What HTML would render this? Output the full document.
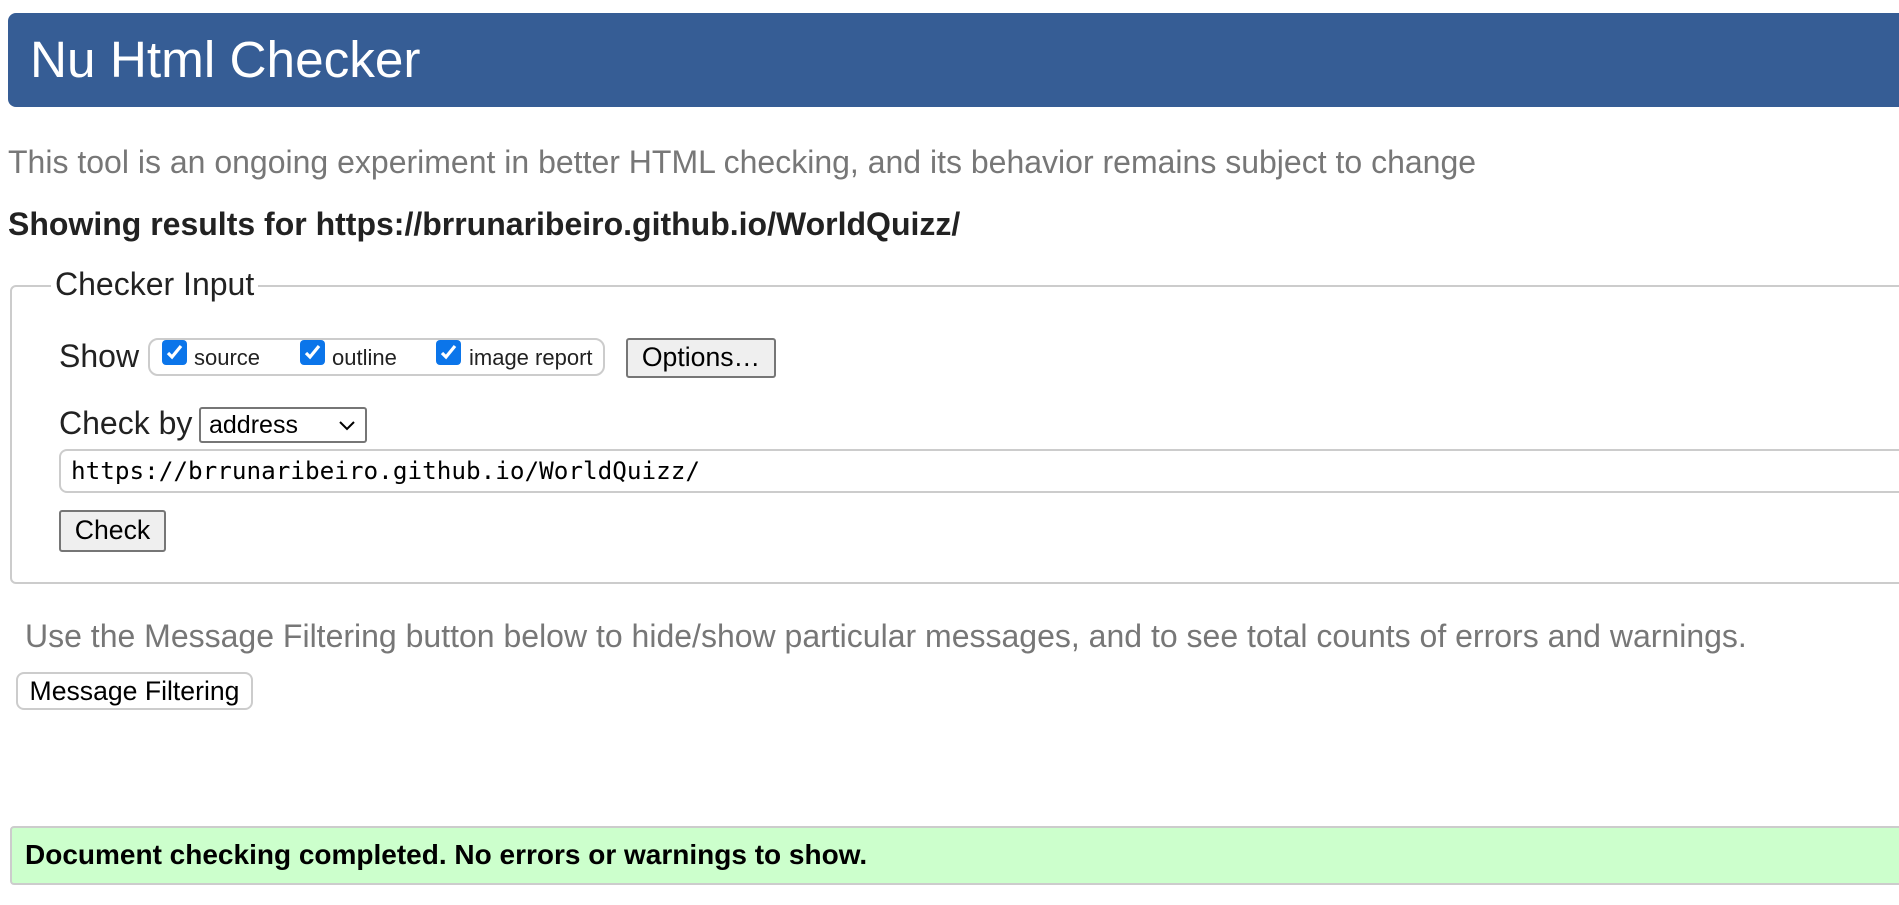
<!DOCTYPE html>
<html><head><meta charset="utf-8"><style>
body{margin:0;width:1899px;height:905px;background:#fff;font-family:"Liberation Sans",Arial,sans-serif;position:relative;overflow:hidden}
.a{position:absolute;white-space:nowrap}
.hdr{left:8px;top:13px;width:1900px;height:94px;background:#365d95;border-radius:8px}
.cb{position:absolute;width:25px;height:25px;background:#0b75ea;border-radius:4px}
.cb svg{position:absolute;left:3px;top:3px}
.btn{position:absolute;background:#efefef;border:2px solid #767676;border-radius:3px;box-sizing:border-box;font-size:26.6px;text-align:center}
</style></head><body>
<div class="a hdr"></div>
<div class="a" style="left:30px;top:30px;font-size:51.3px;color:#fff;line-height:60px">Nu Html Checker</div>
<div class="a" style="left:8px;top:143px;font-size:32px;color:#777;line-height:38px">This tool is an ongoing experiment in better HTML checking, and its behavior remains subject to change</div>
<div class="a" style="left:8px;top:205px;font-size:32px;font-weight:bold;color:#222;line-height:38px">Showing results for https://brrunaribeiro.github.io/WorldQuizz/</div>
<div class="a" style="left:10px;top:285px;width:1900px;height:299px;border:2px solid #ccc;border-radius:6px;box-sizing:border-box"></div>
<div class="a" style="left:51px;top:264px;padding:0 4px;background:#fff;font-size:32px;color:#222;line-height:40px">Checker Input</div>
<div class="a" style="left:59px;top:337px;font-size:32px;color:#222;line-height:38px">Show</div>
<div class="a" style="left:148px;top:338px;width:457px;height:38px;border:2px solid #ccc;border-radius:10px;box-sizing:border-box"></div>
<div class="cb" style="left:162px;top:340px"><svg width="19" height="19" viewBox="0 0 19 19"><path d="M3 10l4 4 9-11" stroke="#fff" stroke-width="3.2" fill="none"/></svg></div>
<div class="a" style="left:194px;top:344px;font-size:22px;color:#222;line-height:28px">source</div>
<div class="cb" style="left:300px;top:340px"><svg width="19" height="19" viewBox="0 0 19 19"><path d="M3 10l4 4 9-11" stroke="#fff" stroke-width="3.2" fill="none"/></svg></div>
<div class="a" style="left:332px;top:344px;font-size:22px;color:#222;line-height:28px">outline</div>
<div class="cb" style="left:436px;top:340px"><svg width="19" height="19" viewBox="0 0 19 19"><path d="M3 10l4 4 9-11" stroke="#fff" stroke-width="3.2" fill="none"/></svg></div>
<div class="a" style="left:469px;top:344px;font-size:22px;color:#222;line-height:28px">image report</div>
<div class="btn" style="left:626px;top:338px;width:150px;height:40px;line-height:35px;color:#000">Options…</div>
<div class="a" style="left:59px;top:404px;font-size:32px;color:#222;line-height:38px">Check by</div>
<div class="a" style="left:199px;top:407px;width:168px;height:36px;border:2px solid #767676;border-radius:3px;box-sizing:border-box;font-size:25px;line-height:32px;padding-left:8px;color:#000">address<svg style="position:absolute;right:10px;top:12px" width="16" height="10" viewBox="0 0 16 10"><path d="M1 1l7 7 7-7" stroke="#000" stroke-width="2" fill="none"/></svg></div>
<div class="a" style="left:59px;top:449px;width:1900px;height:44px;border:2px solid #ccc;border-radius:8px;box-sizing:border-box;font-family:'DejaVu Sans Mono','Liberation Mono',monospace;font-size:24.3px;line-height:40px;padding-left:10px;color:#000">https://brrunaribeiro.github.io/WorldQuizz/</div>
<div class="btn" style="left:59px;top:510px;width:107px;height:42px;line-height:37px;color:#000">Check</div>
<div class="a" style="left:25px;top:617px;font-size:32px;color:#777;line-height:38px">Use the Message Filtering button below to hide/show particular messages, and to see total counts of errors and warnings.</div>
<div class="a" style="left:16px;top:672px;width:237px;height:38px;border:2px solid #ccc;border-radius:8px;box-sizing:border-box;font-size:26.6px;line-height:34px;text-align:center;color:#000">Message Filtering</div>
<div class="a" style="left:10px;top:826px;width:1900px;height:59px;background:#ccffcc;border:2px solid #ccc;border-radius:4px;box-sizing:border-box"></div>
<div class="a" style="left:25px;top:838px;font-size:28px;font-weight:bold;color:#000;line-height:34px">Document checking completed. No errors or warnings to show.</div>
</body></html>
